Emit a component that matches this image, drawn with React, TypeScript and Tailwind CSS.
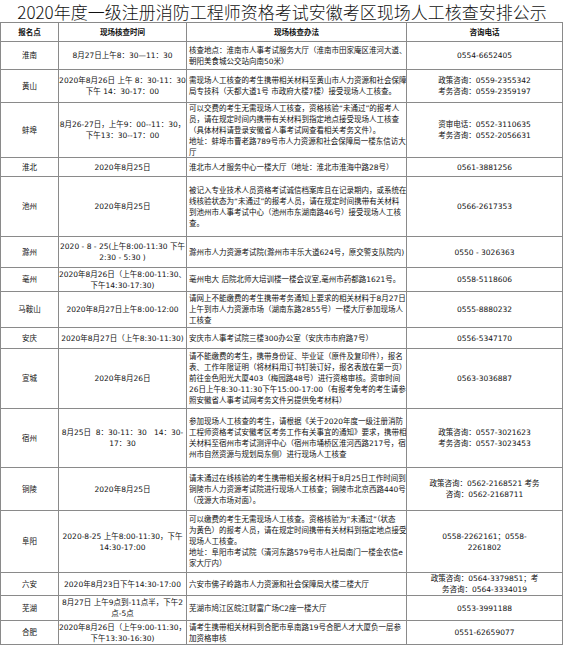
import React from 'react';

type Row = {
  h: string;
  name: string;
  time: string[];
  method: string[];
  phone: string[];
};

const rows: Row[] = [
  {
    h: 'h-[28px]',
    name: '淮南',
    time: ['8月27日上午8：30—11：30'],
    method: ['核查地点：淮南市人事考试服务大厅（淮南市田家庵区淮河大道、', '朝阳美食城公交站向南50米）'],
    phone: ['0554-6652405'],
  },
  {
    h: 'h-[33px]',
    name: '黄山',
    time: ['2020年8月26日 上午 8：30-11：30', '下午 14：30-17：00'],
    method: ['需现场人工核查的考生携带相关材料至黄山市人力资源和社会保障', '局专技科（天都大道1号 市政府大楼7楼）接受现场人工核查。'],
    phone: ['政策咨询：0559-2355342', '考务咨询：0559-2359197'],
  },
  {
    h: 'h-[55px]',
    name: '蚌埠',
    time: ['8月26-27日，上午9：00--11：30，', '下午13：30--17：00'],
    method: [
      '可以交费的考生无需现场人工核查，资格核验“未通过”的报考人',
      '员，请在规定时间内携带有关材料到指定地点接受现场人工核查',
      '（具体材料请登录安徽省人事考试网查看相关考务文件）。',
      '地址：蚌埠市曹老路789号市人力资源和社会保障局一楼东信访大',
      '厅',
    ],
    phone: ['资审电话：0552-3110635', '考务咨询：0552-2056631'],
  },
  {
    h: 'h-[19px]',
    name: '淮北',
    time: ['2020年8月25日'],
    method: ['淮北市人才服务中心一楼大厅（地址：淮北市淮海中路28号）'],
    phone: ['0561-3881256'],
  },
  {
    h: 'h-[60px]',
    name: '池州',
    time: ['2020年8月25日'],
    method: [
      '被记入专业技术人员资格考试诚信档案库且在记录期内，或系统在',
      '线核验状态为“未通过”的报考人员，请在规定时间携带有关材料',
      '到池州市人事考试中心（池州市东湖南路46号）接受现场人工核',
      '查。',
    ],
    phone: ['0566-2617353'],
  },
  {
    h: 'h-[31px]',
    name: '滁州',
    time: ['2020 - 8 - 25(上午8:00-11:30 下午', '2:30 - 5:30 )'],
    method: ['滁州市人力资源考试院(滁州市丰乐大道624号，原交警支队院内)'],
    phone: ['0550 - 3026363'],
  },
  {
    h: 'h-[24px]',
    name: '亳州',
    time: ['2020年8月26日（上午8:00-11:30、', '下午14:30-17:30)'],
    method: ['亳州电大 后院北师大培训楼一楼会议室,亳州市药都路1621号。'],
    phone: ['0558-5118606'],
  },
  {
    h: 'h-[36px]',
    name: '马鞍山',
    time: ['2020年8月27日上午8:00-12:00'],
    method: [
      '请网上不能缴费的考生携带考务通知上要求的相关材料于8月27日',
      '上午到市人力资源市场（湖南东路2855号）一楼大厅参加现场人',
      '工核查',
    ],
    phone: ['0555-8880232'],
  },
  {
    h: 'h-[21px]',
    name: '安庆',
    time: ['2020年8月27日（上午8:30-11:30)'],
    method: ['安庆市人事考试院三楼300办公室（安庆市市府路7号）'],
    phone: ['0556-5347170'],
  },
  {
    h: 'h-[60px]',
    name: '宣城',
    time: ['2020年8月26日'],
    method: [
      '请不能缴费的考生，携带身份证、毕业证（原件及复印件），报名',
      '表、工作年限证明（将材料用订书钉装订好，报名表放在第一页）',
      '前往金色阳光大厦403（梅园路48号）进行资格审核。资审时间',
      '26日上午8:30-11:30下午15:00-17:00（有报考免考的考生请参',
      '照安徽省人事考试网考务文件另提供免考材料）',
    ],
    phone: ['0563-3036887'],
  },
  {
    h: 'h-[59px]',
    name: '宿州',
    time: ['8月25日  8：30-11：30   14：30-', '17：30'],
    method: [
      '参加现场人工核查的考生，请根据《关于2020年度一级注册消防',
      '工程师资格考试安徽考区考务工作有关事宜的通知》要求，携带相',
      '关材料至宿州市考试测评中心（宿州市埇桥区淮河西路217号，宿',
      '州市自然资源与规划局东侧）进行现场人工核查',
    ],
    phone: ['政策咨询：0557-3021623', '考务咨询：0557-3023453'],
  },
  {
    h: 'h-[43px]',
    name: '铜陵',
    time: ['2020年8月25日'],
    method: [
      '请未通过在线核验的考生携带相关报名材料于8月25日工作时间到',
      '铜陵市人力资源考试院进行现场人工核查；铜陵市北京西路440号',
      '（茂源大市场对面）。',
    ],
    phone: ['政策咨询：0562-2168521 考务', '咨询：0562-2168711'],
  },
  {
    h: 'h-[62px]',
    name: '阜阳',
    time: ['2020-8-25 上午8:00-11:30，下午', '14:30-17:00'],
    method: [
      '可以缴费的考生无需现场人工核查。资格核验为“未通过”（状态',
      '为黄色）的报考人员，请在规定时间携带有关材料到指定地点接受',
      '现场人工核查。',
      '地址：阜阳市考试院（清河东路579号市人社局南门一楼金农信e',
      '家大厅内）',
    ],
    phone: ['0558-2262161；0558-', '2261802'],
  },
  {
    h: 'h-[23px]',
    name: '六安',
    time: ['2020年8月23日下午14:30-17:00'],
    method: ['六安市佛子岭路市人力资源和社会保障局大楼二楼大厅'],
    phone: ['政策咨询：0564-3379851；考', '务咨询：0564-3334019'],
  },
  {
    h: 'h-[25px]',
    name: '芜湖',
    time: ['8月27日 上午9点到-11点半，下午2', '点-5点'],
    method: ['芜湖市鸠江区皖江财富广场C2座一楼大厅'],
    phone: ['0553-3991188'],
  },
  {
    h: 'h-[24px]',
    name: '合肥',
    time: ['2020年8月26日（上午9:00-11:30，', '下午13:30-16:30)'],
    method: ['请考生携带相关材料到合肥市阜南路19号合肥人才大厦负一层参', '加资格审核'],
    phone: ['0551-62659077'],
  },
];

const font = { fontFamily: '"DejaVu Sans", "Noto Sans CJK SC", sans-serif' };

function Lines({ lines }: { lines: string[] }) {
  return (
    <>
      {lines.map((l, i) => (
        <div key={i} className="whitespace-pre">
          {l}
        </div>
      ))}
    </>
  );
}

export default function App() {
  return (
    <div className="w-[564px] h-[645px] bg-white text-black overflow-hidden">
      <div
        className="h-[22px] flex items-center justify-center text-[17px] leading-[20px] font-light pt-[1px] text-[#111]"
        style={{ fontFamily: '"Noto Sans CJK SC", sans-serif' }}
      >
        2020年度一级注册消防工程师资格考试安徽考区现场人工核查安排公示
      </div>
      <div className="w-[563px] border-t border-l border-[#8a8a8a] text-[7.5px] leading-[11px] text-[#111]" style={font}>
        <div className="grid grid-cols-[58px_128px_220px_156px] h-[19px] border-b border-[#8a8a8a] font-bold">
          <div className="border-r border-[#8a8a8a] flex items-center justify-center">报名点</div>
          <div className="border-r border-[#8a8a8a] flex items-center justify-center">现场核查时间</div>
          <div className="border-r border-[#8a8a8a] flex items-center justify-center">现场核查办法</div>
          <div className="border-r border-[#8a8a8a] flex items-center justify-center">咨询电话</div>
        </div>
        {rows.map((r) => (
          <div key={r.name} className={`grid grid-cols-[58px_128px_220px_156px] border-b border-[#8a8a8a] ${r.h}`}>
            <div className="border-r border-[#8a8a8a] flex items-center justify-center">{r.name}</div>
            <div className="border-r border-[#8a8a8a] flex flex-col justify-center items-center text-center">
              <Lines lines={r.time} />
            </div>
            <div className="border-r border-[#8a8a8a] flex flex-col justify-center pl-[2px] overflow-hidden">
              <Lines lines={r.method} />
            </div>
            <div className="border-r border-[#8a8a8a] flex flex-col justify-center items-center text-center">
              <Lines lines={r.phone} />
            </div>
          </div>
        ))}
      </div>
    </div>
  );
}
